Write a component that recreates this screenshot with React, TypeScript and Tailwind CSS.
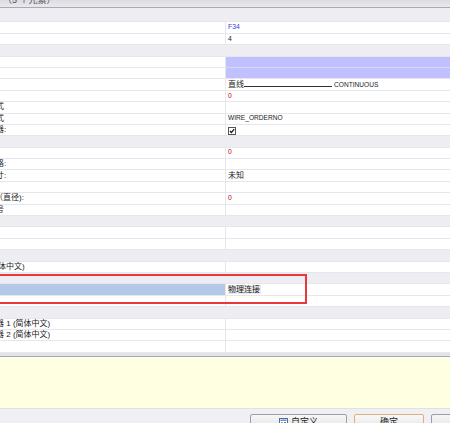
import React from "react";

type Row = {
  kind?: "section" | "item";
  label?: string;
  labelShift?: string;
  value?: React.ReactNode;
  valueClass?: string;
  rightBg?: string;
  leftBg?: string;
};

const rows: Row[] = [
  { kind: "section" },
  { value: "F34", valueClass: "text-[#3a3ad8] text-[6.8px]" },
  { value: "4", valueClass: "text-[6.8px]" },
  { kind: "section" },
  { rightBg: "bg-[#c0c0fe] border-b-[#d6d6ff]" },
  { rightBg: "bg-[#c0c0fe]" },
  {
    value: (
      <span className="flex items-end">
        <span className="text-[8px]">直线</span>
        <span className="w-[88px] border-b border-[#333] mb-[2px]" />
        <span className="text-[6.6px] ml-[2px]">CONTINUOUS</span>
      </span>
    ),
  },
  { value: "0", valueClass: "text-[#c80000] text-[6.8px]" },
  { label: "式", labelShift: "ml-[-4px]" },
  { label: "式", labelShift: "ml-[-4px]", value: "WIRE_ORDERNO", valueClass: "text-[6.6px]" },
  {
    label: "器:",
    labelShift: "ml-[-4px]",
    value: (
      <svg width="8" height="8" viewBox="0 0 8 8" className="mt-[1px]">
        <rect x="0.5" y="0.5" width="7" height="7" fill="#fff" stroke="#555" />
        <path d="M2 4 L3.4 5.6 L6.2 2.2" fill="none" stroke="#111" strokeWidth="1.3" />
      </svg>
    ),
  },
  { kind: "section" },
  { value: "0", valueClass: "text-[#c80000] text-[6.8px]" },
  { label: "格:", labelShift: "ml-[-4px]" },
  { label: "寸:", labelShift: "ml-[-4px]", value: "未知" },
  {},
  { label: "（直径):", labelShift: "ml-[-5px]", value: "0", valueClass: "text-[#c80000] text-[6.8px]" },
  { label: "号", labelShift: "ml-[-4px]" },
  { kind: "section" },
  {},
  {},
  { kind: "section" },
  { label: "体中文)", labelShift: "ml-[-2px]" },
  { kind: "section" },
  {
    leftBg: "bg-[#b4c8ea]",
    value: <span className="bg-[#ececec] pr-[1px]">物理连接</span>,
  },
  {},
  { kind: "section" },
  { label: "器 1 (简体中文)", labelShift: "ml-[-4px]" },
  { label: "器 2 (简体中文)", labelShift: "ml-[-4px]" },
  {},
];

function GridRow({ row }: { row: Row }) {
  if (row.kind === "section") {
    return <div className="h-[11.4px] bg-[#ededf2] border-b border-[#e6e6ec]" />;
  }
  return (
    <div className="h-[11.4px] flex">
      <div
        className={`w-[226px] shrink-0 flex items-center overflow-hidden border-b border-r border-[#e6e6ec] ${
          row.leftBg ?? "bg-white"
        }`}
      >
        {row.label && (
          <span className={`whitespace-nowrap text-[8px] leading-none ${row.labelShift ?? ""}`}>{row.label}</span>
        )}
      </div>
      <div
        className={`flex-1 flex items-center pl-[2px] border-b border-[#e6e6ec] ${row.rightBg ?? "bg-white"}`}
      >
        {row.value && (
          <span className={`whitespace-nowrap leading-none ${row.valueClass ?? "text-[8px]"}`}>{row.value}</span>
        )}
      </div>
    </div>
  );
}

export default function App() {
  return (
    <div
      className="relative w-[450px] h-[423px] overflow-hidden bg-[#f0f0f4] text-[#1a1a1a]"
      style={{ fontFamily: '"Liberation Sans", "Noto Sans CJK SC", sans-serif' }}
    >
      {/* ── title strip (cut off at top) ───────────── */}
      <div className="h-[7px] overflow-hidden bg-gradient-to-b from-[#dcdce2] to-[#e9e9ee]">
        <div className="mt-[-5px] pl-[3px] text-[9px] leading-[11px] text-[#555]">（5 个元素）</div>
      </div>
      <div className="h-[1px] bg-[#a9a9b2]" />
      <div className="h-[3px] bg-[#eeeef2]" />

      {/* ── property grid ─────────────────────────── */}
      <div className="flex flex-col">
        {rows.map((r, i) => (
          <GridRow key={i} row={r} />
        ))}
      </div>

      {/* ── description pane ─────────────────────── */}
      <div className="h-[4px] bg-[#e2e2e8] border-b border-[#a8a8b4]" />
      <div className="h-[52px] bg-[#ffffe1] border-b border-[#e2e2dc]" />

      {/* ── buttons ──────────────────────────────── */}
      <div className="flex pt-[5px] pl-[250px] gap-[7px]">
        <div className="w-[97px] h-[20px] shrink-0 rounded-[2px] border border-[#9d9da4] bg-gradient-to-b from-[#f6f6f6] to-[#dedede] flex justify-center pt-[2px] gap-[3px]">
          <svg width="9" height="9" viewBox="0 0 9 9" className="mt-[1px]">
            <rect x="0.5" y="0.5" width="8" height="8" fill="#fff" stroke="#4a6fae" />
            <rect x="1.5" y="1.5" width="6" height="1.5" fill="#6c8fd0" />
            <rect x="2" y="4" width="2" height="3" fill="#e39a2a" />
            <path d="M5 4.5h2M5 6.5h2" stroke="#555" strokeWidth="0.8" />
          </svg>
          <span className="text-[9px] leading-[11px]">自定义</span>
        </div>
        <div className="w-[70px] h-[20px] shrink-0 rounded-[2px] border border-[#d9b27a] bg-gradient-to-b from-[#f8f8f8] to-[#e0e0e0] flex justify-center pt-[2px]">
          <span className="text-[9px] leading-[11px]">确定</span>
        </div>
        <div className="w-[70px] h-[20px] shrink-0 rounded-[2px] border border-[#9d9da4] bg-gradient-to-b from-[#f6f6f6] to-[#dedede]" />
      </div>

      {/* ── red highlight box ─────────────────────── */}
      <div className="absolute left-[-4px] top-[274px] w-[311px] h-[30px] border-2 border-[#e8383a]" />
    </div>
  );
}
